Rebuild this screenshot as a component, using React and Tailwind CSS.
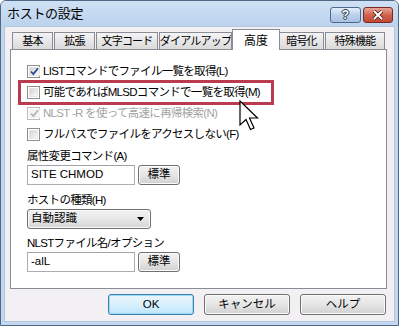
import React from "react";

const font = { fontFamily: '"Liberation Sans", "Noto Sans CJK JP", sans-serif' };

const Check = ({ checked, disabled }) => (
  <span
    className={`w-[13px] h-[13px] shrink-0 border bg-white p-px flex ${
      disabled ? "border-[#bcbcbc]" : "border-[#8e8f8f]"
    }`}
  >
    <span
      className={`flex-1 border flex items-center justify-center ${
        disabled
          ? "border-[#f2f2f2] bg-[#f4f4f4]"
          : "border-[#e6e6e6] bg-gradient-to-br from-[#d2d2d2] to-[#fbfbfb]"
      }`}
    >
      {checked && (
        <svg width="9" height="9" viewBox="0 0 9 9">
          <path
            d="M1 4.5 L3.3 7 L8 1.2"
            fill="none"
            stroke={disabled ? "#b4b4b4" : "#2a4f9c"}
            strokeWidth="1.8"
          />
        </svg>
      )}
    </span>
  </span>
);

const Row = ({ checked, disabled, children }) => (
  <div className="h-[21px] flex items-center gap-[3px]">
    <Check checked={checked} disabled={disabled} />
    <span className={`text-[11.5px] tracking-[-0.7px] whitespace-nowrap ${disabled ? "text-[#a3a3a3]" : "text-black"}`}>
      {children}
    </span>
  </div>
);

const SmallButton = ({ children, className = "" }) => (
  <div
    className={`h-[20px] border border-[#707070] rounded-[3px] bg-gradient-to-b from-[#f2f2f2] via-[#e6e6e6] to-[#d0d0d0] flex items-center justify-center text-[11.5px] text-black shadow-[inset_0_0_0_1px_#fbfbfb] ${className}`}
  >
    {children}
  </div>
);

const Field = ({ value }) => (
  <div className="flex items-center gap-[3px]">
    <div className="w-[108px] h-[20px] border border-[#abadb3] border-t-[#a0a2a8] bg-white flex items-center px-[3px] text-[11.5px] text-black">
      {value}
    </div>
    <SmallButton className="w-[42px]">標準</SmallButton>
  </div>
);

const Label = ({ children, className = "" }) => (
  <div className={`h-[16px] flex items-center text-[11.5px] tracking-[-0.7px] text-black whitespace-nowrap ${className}`}>
    {children}
  </div>
);

const tabs = [
  { label: "基本", w: "w-[41px]" },
  { label: "拡張", w: "w-[41px]" },
  { label: "文字コード", w: "w-[62px]" },
  { label: "ダイアルアップ", w: "w-[73px]" },
  { label: "高度", w: "w-[48px]", active: true },
  { label: "暗号化", w: "w-[45px]" },
  { label: "特殊機能", w: "w-[60px]" },
];

export default function App() {
  return (
    <div
      className="w-[399px] h-[326px] bg-[#c3d8f0] border border-[#4f6886] rounded-t-[6px] flex flex-col relative overflow-hidden"
      style={font}
    >
      {/* Title bar */}
      <div className="h-[25px] shrink-0 flex items-center pl-[6px] pr-[5px] bg-gradient-to-b from-[#cfe0f3] to-[#bcd3ee]">
        <span className="text-[13px] text-black tracking-[-0.3px]">ホストの設定</span>
        <div className="ml-auto flex gap-[2px] mt-[2px]">
          <div className="w-[31px] h-[16px] rounded-[3px] border border-[#4d6a8e] bg-gradient-to-b from-[#e4eef9] via-[#bcd1ea] to-[#a8c2e2] flex items-center justify-center">
            <span className="text-[12px] font-bold text-white leading-none [text-shadow:0_0_1px_#203040,1px_0_0_#2a3c52,-1px_0_0_#2a3c52,0_1px_0_#2a3c52,0_-1px_0_#2a3c52]">?</span>
          </div>
          <div className="w-[30px] h-[16px] rounded-[3px] border border-[#7a2a20] bg-gradient-to-b from-[#e8a596] via-[#d0624e] to-[#c04a33] flex items-center justify-center">
            <svg width="12" height="10" viewBox="0 0 12 10">
              <path d="M2 1 L10 9 M10 1 L2 9" stroke="#4a1a12" strokeWidth="3.6" />
              <path d="M2 1 L10 9 M10 1 L2 9" stroke="#ffffff" strokeWidth="2" />
            </svg>
          </div>
        </div>
      </div>

      {/* Client area */}
      <div className="flex-1 mx-[3px] mb-[3px] bg-[#f2f0f2] border border-[#b4c6dc] flex flex-col pl-[5px] pr-[7px] pt-[2px]">
        {/* Tabs */}
        <div className="flex items-end h-[20px] pl-[2px] relative z-10">
          {tabs.map((t) =>
            t.active ? (
              <div
                key={t.label}
                className={`${t.w} h-[21px] -mb-px ml-0 -mr-[2px] border border-[#898c95] border-b-0 bg-white flex items-start justify-center pt-[2px] text-[12px] text-black whitespace-nowrap relative z-10`}
              >
                {t.label}
              </div>
            ) : (
              <div
                key={t.label}
                className={`${t.w} h-[17px] border border-[#898c95] border-b-0 bg-gradient-to-b from-[#f4f4f4] to-[#dadada] flex items-center justify-center text-[11px] text-black tracking-[-0.8px] whitespace-nowrap overflow-hidden ml-px first:ml-0`}
              >
                {t.label}
              </div>
            )
          )}
        </div>

        {/* Panel */}
        <div className="w-[377px] h-[240px] border border-[#898c95] bg-white pl-[16px] pt-[11px] flex flex-col">
          <Row checked>LISTコマンドでファイル一覧を取得(L)</Row>
          <Row>可能であればMLSDコマンドで一覧を取得(M)</Row>
          <Row checked disabled>NLST -R を使って高速に再帰検索(N)</Row>
          <Row>フルパスでファイルをアクセスしない(F)</Row>

          <Label className="mt-[4px]">属性変更コマンド(A)</Label>
          <Field value="SITE CHMOD" />

          <Label className="mt-[8px]">ホストの種類(H)</Label>
          <div className="w-[124px] h-[20px] border border-[#707070] rounded-[3px] bg-gradient-to-b from-[#f2f2f2] via-[#e8e8e8] to-[#d4d4d4] flex items-center pl-[3px] pr-[6px] text-[11.5px] text-black shadow-[inset_0_0_0_1px_#fbfbfb]">
            <span>自動認識</span>
            <svg className="ml-auto" width="7" height="4" viewBox="0 0 7 4">
              <path d="M0 0 L7 0 L3.5 4 Z" fill="#000" />
            </svg>
          </div>

          <Label className="mt-[7px]">NLSTファイル名/オプション</Label>
          <Field value="-alL" />
        </div>

        {/* Buttons */}
        <div className="flex justify-end gap-[10px] mt-[5px] pr-[1px]">
          <div className="w-[86px] h-[21px] rounded-[3px] border border-[#3c7fb1] bg-gradient-to-b from-[#eaf6fd] via-[#d9f0fc] to-[#bee6fd] shadow-[inset_0_0_0_1px_#9edaf8] flex items-center justify-center text-[11.5px] text-black">
            OK
          </div>
          <SmallButton className="w-[86px] h-[21px]">キャンセル</SmallButton>
          <SmallButton className="w-[86px] h-[21px]">ヘルプ</SmallButton>
        </div>
      </div>

      {/* Highlight annotation */}
      <div className="absolute left-[17px] top-[79px] w-[256px] h-[25px] border-[3px] border-[#b93b4d] pointer-events-none" />

      {/* Mouse cursor */}
      <svg
        className="absolute left-[238px] top-[99px] pointer-events-none"
        width="22"
        height="32"
        viewBox="0 0 22 32"
      >
        <path
          d="M1 1 L1 25 L7 19.5 L11.5 29.5 L15 28 L10.5 18 L18.5 18 Z"
          fill="#fff"
          stroke="#000"
          strokeWidth="1.2"
          strokeLinejoin="miter"
        />
      </svg>
    </div>
  );
}
